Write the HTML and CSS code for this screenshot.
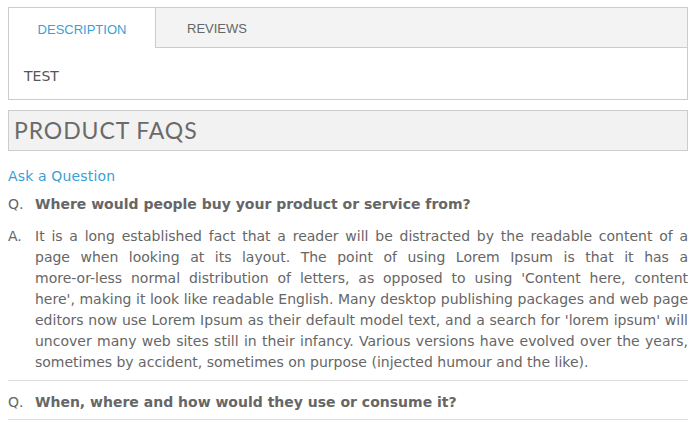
FILE: index.html
```html
<!DOCTYPE html>
<html>
<head>
<meta charset="utf-8">
<link rel="stylesheet" href="styles.css">
</head>
<body>
<div class="tabs">
  <div class="tab-head">
    <div class="tab active">DESCRIPTION</div>
    <div class="tab rest"><span>REVIEWS</span></div>
  </div>
  <div class="tab-body">TEST</div>
</div>
<h2 class="faq-title">PRODUCT FAQS</h2>
<a class="ask" href="#">Ask a Question</a>
<div class="faq first">
  <div class="row q"><span class="lbl">Q.</span><strong class="txt">Where would people buy your product or service from?</strong></div>
  <div class="row a"><span class="lbl">A.</span><p class="txt">
    <span class="ln">It is a long established fact that a reader will be distracted by the readable content of a</span>
    <span class="ln">page when looking at its layout. The point of using Lorem Ipsum is that it has a</span>
    <span class="ln">more-or-less normal distribution of letters, as opposed to using 'Content here, content</span>
    <span class="ln">here', making it look like readable English. Many desktop publishing packages and web page</span>
    <span class="ln">editors now use Lorem Ipsum as their default model text, and a search for 'lorem ipsum' will</span>
    <span class="ln">uncover many web sites still in their infancy. Various versions have evolved over the years,</span>
    <span class="ln last">sometimes by accident, sometimes on purpose (injected humour and the like).</span>
  </p></div>
</div>
<div class="faq second">
  <div class="row q"><span class="lbl">Q.</span><strong class="txt">When, where and how would they use or consume it?</strong></div>
</div>
</body>
</html>
```

FILE: styles.css
```css
html, body { background: #fff; }
body {
  margin: 7px 9px 0 8px;
  font-family: "DejaVu Sans", Verdana, sans-serif;
  font-size: 14px;
  color: #666;
}
.tabs {
  border: 1px solid #ccc;
}
.tab-head {
  display: flex;
  height: 40px;
}
.tab {
  font-family: "Liberation Sans", Arial, sans-serif;
  font-size: 13px;
  line-height: 40px;
  padding-top: 2px;
  box-sizing: border-box;
}
.tab.active {
  width: 147px;
  text-align: center;
  color: #3a9fd6;
  background: #fff;
  border-right: 1px solid #ccc;
}
.tab.rest {
  flex: 1;
  background: #f3f3f3;
  border-bottom: 1px solid #ccc;
  height: 40px;
  line-height: 38px;
  color: #666;
  padding-left: 31px;
}
.tab-body {
  height: 51px;
  line-height: 57px;
  padding-left: 15px;
  font-size: 14px;
  color: #555;
}
.faq-title {
  margin: 10px 0 0;
  height: 39px;
  line-height: 39px;
  border: 1px solid #ccc;
  background: #f2f2f2;
  padding-left: 5px;
  font-family: "Lato", "Open Sans", sans-serif;
  font-weight: 400;
  font-size: 23px;
  color: #6a6a6a;
  letter-spacing: 0.9px;
}
.ask {
  display: block;
  margin-top: 15px;
  line-height: 21px;
  color: #3a9fd6;
  text-decoration: none;
  letter-spacing: 0.15px;
}
.faq {
  border-bottom: 1px solid #ddd;
}
.faq.first { padding-top: 7px; padding-bottom: 7px; }
.faq.second { padding-top: 11px; padding-bottom: 6px; }
.row {
  display: flex;
  line-height: 21px;
}
.row.a { margin-top: 11px; }
.lbl {
  width: 27px;
  flex: none;
}
.txt {
  flex: 1;
  margin: 0;
}
strong.txt { font-weight: bold; color: #666; }
.ln {
  display: block;
  text-align: justify;
  text-align-last: justify;
}
.ln.last { text-align-last: left; }
```
